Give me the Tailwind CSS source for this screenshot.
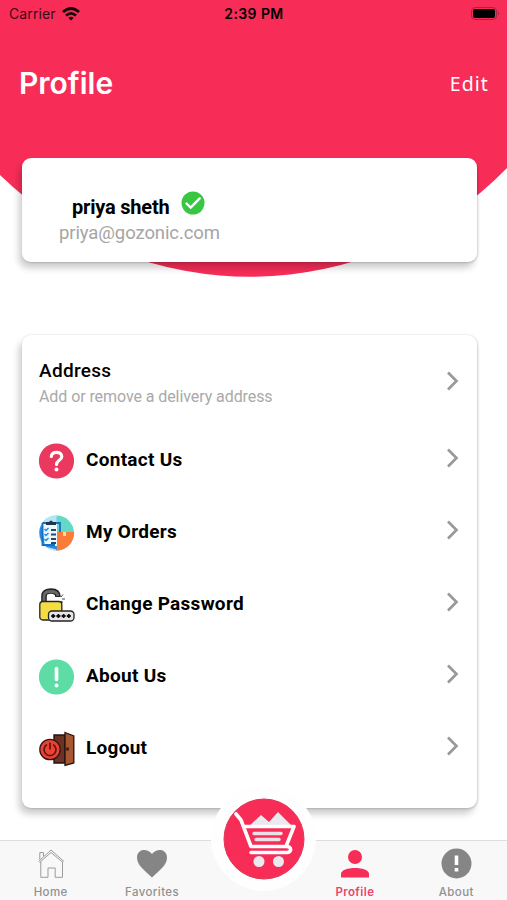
<!DOCTYPE html>
<html lang="en">
<head>
    <meta charset="UTF-8">
    <meta name="viewport" content="width=device-width, initial-scale=1.0">
    <title>Profile</title>
    <script src="https://cdn.jsdelivr.net/npm/@tailwindcss/browser@4"></script>
</head>
<body class="bg-white">
    <div class="relative w-[507px] h-[900px] overflow-hidden flex flex-col font-['Roboto',sans-serif]">
        <!-- Curved backdrop -->
        <svg class="absolute left-0 top-0" width="507" height="280" viewBox="0 0 507 280"><path d="M0 0H507V168A358 358 0 0 1 0 175Z" fill="#f72d58"/></svg>

        <!-- Status bar -->
        <div class="relative h-7 flex items-center justify-between pl-[9px] pr-[7px] pb-px font-['Inter',sans-serif] text-[14px] text-black">
            <div class="flex items-center gap-[6px] w-[199px]">
                <span class="tracking-[0.1px] text-black/80">Carrier</span>
                <svg width="18" height="14" viewBox="0 0 18 14" fill="none" stroke="#160509" stroke-width="2.7"><path d="M1 5.1Q9-2.1 17 5.1M4 8.5Q9 4.1 14 8.5"/><path d="M9 13.5L6.3 10.8Q9 8.6 11.7 10.8Z" fill="#160509" stroke="none"/></svg>
            </div>
            <span class="font-semibold text-[14px] tracking-[0.4px] whitespace-nowrap">2:39 PM</span>
            <div class="w-[200px] flex justify-end">
                <svg width="29" height="14" viewBox="0 0 29 14"><rect x=".5" y=".5" width="25" height="12" rx="3.5" fill="none" stroke="#a32542"/><rect x="2" y="2" width="22" height="9" rx="2" fill="#000"/><path d="M27 4.5q2 2 0 4z" fill="#a32542"/></svg>
            </div>
        </div>

        <!-- Title -->
        <header class="relative h-[130px] flex justify-between items-start px-[19px] pt-[33px] text-white font-['Inter',sans-serif]">
            <h1 class="text-[30px] leading-[44px] font-semibold">Profile</h1>
            <a href="#" class="text-[19.5px] leading-[46px] font-['Noto_Sans',sans-serif] tracking-[1.1px] -mr-px">Edit</a>
        </header>

        <!-- User card -->
        <section class="relative ml-[22px] w-[455px] h-[104px] rounded-[9px] bg-white pt-8 shadow-[-3px_6px_7px_rgba(0,0,0,0.2),1px_1px_2px_rgba(0,0,0,0.15)]">
            <div class="flex items-center pl-[50px] h-[30px]">
                <span class="w-[97px] text-[20px] leading-[30px] font-bold tracking-[-0.2px] whitespace-nowrap pt-[4px]">priya sheth</span>
                <svg class="ml-3 mb-1" width="24" height="24" viewBox="0 0 24 24"><circle cx="12" cy="12" r="11.5" fill="#38c743"/><path d="M5.5 12.5l4.2 4.1 9-9.2" fill="none" stroke="#fff" stroke-width="2.4" stroke-linecap="round"/></svg>
            </div>
            <p class="pl-[37px] text-[18.5px] leading-[27px] tracking-[-0.1px] text-[#a5a5a5] whitespace-nowrap">priya@gozonic.com</p>
        </section>

        <!-- Menu card -->
        <main class="relative mt-[73px] ml-[22px] w-[455px] h-[473px] rounded-[9px] bg-white pl-[17px] pr-[17px] pt-[22px] shadow-[-3px_6px_7px_rgba(0,0,0,0.2),1px_1px_2px_rgba(0,0,0,0.15),0_-1px_2px_rgba(0,0,0,0.06)]">
            <a href="#" class="flex items-center justify-between h-[46px]">
                <div class="mt-2 whitespace-nowrap">
                    <div class="text-[19px] leading-[26px] font-medium tracking-[0.3px]">Address</div>
                    <div class="text-[16px] leading-[26px] tracking-[-0.08px] text-[#a9a9a9]">Add or remove a delivery address</div>
                </div>
                <svg class="mt-px" width="14" height="20" viewBox="0 0 14 20" fill="none" stroke="#999" stroke-width="2.7"><path d="M2 1.5L10.5 10 2 18.5"/></svg>
            </a>
            <a href="#" class="mt-[22px] flex items-center h-[72px]">
                <svg width="36" height="36" viewBox="0 0 36 36"><circle cx="17.5" cy="18" r="17.6" fill="#eb385e"/><path d="M12.3 13.5C12.3 8 22.8 8 22.8 13.5c0 3.800-5.300 3.800-5.300 8" fill="none" stroke="#fff" stroke-width="3.2" stroke-linecap="round"/><circle cx="17.5" cy="26.500" r="2" fill="#fff"/></svg>
                <span class="ml-[11px] mb-[2px] flex-1 text-[19px] font-bold tracking-[0.28px]">Contact Us</span>
                <svg class="-mt-[7px]" width="14" height="20" viewBox="0 0 14 20" fill="none" stroke="#999" stroke-width="2.7"><path d="M2 1.5L10.5 10 2 18.5"/></svg>
            </a>
            <a href="#" class="flex items-center h-[72px]">
                <svg width="36" height="36" viewBox="0 0 36 36">
                    <circle cx="17.5" cy="18" r="17.5" fill="#65d9c7"/>
                    <path d="M17.5 18V.5A17.5 17.5 0 0 0 17.5 35.5z" fill="#b7e5f8"/>
                    <path d="M17 17H35A17.5 17.5 0 0 1 17 35.5z" fill="#fa7c38"/>
                    <path d="M24 17h3v4h-3z" fill="#ffd9a6"/>
                    <path d="M2.5 9.5Q-2 17 2.8 27l5 5 10 2.5V31H6z" fill="#258be2"/>
                    <path d="M4 8h14v23H6z" fill="#eef8ff"/>
                    <path d="M3.5 8H21v9M3.5 8v22H16" fill="none" stroke="#176fc2" stroke-width="1.8"/>
                    <path d="M7 10V7h3q2-3 4 0h3v3z" fill="#23344d"/>
                    <path d="M5.5 14l1.5 1.5L9.5 13M5.5 19l1.5 1.5L9.5 18M5.5 24l1.5 1.5L9.5 23" fill="none" stroke="#168ceb" stroke-width="1.4"/>
                    <path d="M12 15h5M12 19.5h5M12 24h5M12 28h5" stroke="#25486d" stroke-width="1.8"/>
                </svg>
                <span class="ml-[11px] mb-[2px] flex-1 text-[19px] font-bold tracking-[0.28px]">My Orders</span>
                <svg class="-mt-[7px]" width="14" height="20" viewBox="0 0 14 20" fill="none" stroke="#999" stroke-width="2.7"><path d="M2 1.5L10.5 10 2 18.5"/></svg>
            </a>
            <a href="#" class="flex items-center h-[72px]">
                <svg class="mt-[2px]" width="36" height="36" viewBox="0 0 36 36">
                    <path d="M5 15V8q0-5 7-5Q19 3 19 9" fill="none" stroke="#242424" stroke-width="5.6"/>
                    <path d="M5 14V8q0-4.500 7-4.500Q18.500 3.500 19 8" fill="none" stroke="#686868" stroke-width="2.8"/>
                    <rect x=".8" y="13.5" width="22" height="18.5" rx="3" fill="#f6dc43" stroke="#242424" stroke-width="1.3"/>
                    <path d="M22 9l2-2.500M23 11h3M22 13l2 1.500" stroke="#444" stroke-width="1"/>
                    <rect x="9.5" y="23" width="25.5" height="10" rx="3.5" fill="#e5e5e8" stroke="#242424" stroke-width="1.3"/>
                    <path d="M12.2 28h4M14.2 26v4M17.4 28h4M19.4 26v4M22.6 28h4M24.6 26v4M27.8 28h4M29.8 26v4" stroke="#111" stroke-width="1.8"/>
                </svg>
                <span class="ml-[11px] mb-[2px] flex-1 text-[19px] font-bold tracking-[0.28px]">Change Password</span>
                <svg class="-mt-[7px]" width="14" height="20" viewBox="0 0 14 20" fill="none" stroke="#999" stroke-width="2.7"><path d="M2 1.5L10.5 10 2 18.5"/></svg>
            </a>
            <a href="#" class="flex items-center h-[72px]">
                <svg width="36" height="36" viewBox="0 0 36 36"><circle cx="17.5" cy="18" r="17.6" fill="#5ddda5"/><path d="M17.5 9.5v11" stroke="#fff" stroke-width="3.6" stroke-linecap="round"/><circle cx="17.5" cy="26.5" r="2" fill="#fff"/></svg>
                <span class="ml-[11px] mb-[2px] flex-1 text-[19px] font-bold tracking-[0.28px]">About Us</span>
                <svg class="-mt-[7px]" width="14" height="20" viewBox="0 0 14 20" fill="none" stroke="#999" stroke-width="2.7"><path d="M2 1.5L10.5 10 2 18.5"/></svg>
            </a>
            <a href="#" class="flex items-center h-[72px]">
                <svg width="36" height="36" viewBox="0 0 36 36">
                    <path d="M15 4h11v28H15z" fill="#6b3325" stroke="#25130f" stroke-width="1.4"/>
                    <path d="M26 1.5l8.8 3.5v27L26 34.500z" fill="#a85630" stroke="#25130f" stroke-width="1.3"/>
                    <path d="M28.5 16.500v3" stroke="#281711" stroke-width="2.5"/>
                    <circle cx="11" cy="18.5" r="10.2" fill="#ee4035" stroke="#381612" stroke-width="1.3"/>
                    <path d="M8 13.5a6 6 0 1 0 6 0M11 11.5v7" fill="none" stroke="#591810" stroke-width="1.7"/>
                </svg>
                <span class="ml-[11px] mb-[2px] flex-1 text-[19px] font-bold tracking-[0.28px]">Logout</span>
                <svg class="-mt-[7px]" width="14" height="20" viewBox="0 0 14 20" fill="none" stroke="#999" stroke-width="2.7"><path d="M2 1.5L10.5 10 2 18.5"/></svg>
            </a>
        </main>

        <!-- Tab bar -->
        <nav class="relative mt-8 h-[60px] bg-[#f8f8f8] border-t border-[#dedede] grid grid-cols-5 font-['Inter',sans-serif] text-[11.5px] leading-[15px] font-medium tracking-[0.4px] text-[#909090]">
            <a href="#" class="flex flex-col items-center pt-[7px] gap-[6px]">
                <svg width="30" height="31" viewBox="0 0 30 31" fill="none" stroke="#9b9b9b" stroke-width="1"><path d="M2.5 13.500L15 2l13 11.500M3.500 14.500L15 4.500l12 10M3.800 11.500V4.500h3.700v3.500M4.800 14v15.300h7.200V20h7.200v9.300h7.300V14"/></svg>
                <span>Home</span>
            </a>
            <a href="#" class="flex flex-col items-center pt-[7px] gap-[6px]">
                <svg width="32" height="31" viewBox="0 0 32 31"><path d="M16 29.5C8 22 1 17 1 9.5 1 1 11-.5 16 6c5-6.500 15-5 15 3.500 0 7.500-7 12.500-15 20z" fill="#858585"/></svg>
                <span>Favorites</span>
            </a>
            <div></div>
            <a href="#" class="flex flex-col items-center pt-[7px] gap-[6px] text-[#e9456c]">
                <svg width="30" height="31" viewBox="0 0 30 31" fill="#f72d58"><circle cx="15" cy="9" r="7"/><path d="M1 29.500v-3.500c0-8 28-8 28 0v3.500z"/></svg>
                <span class="font-semibold">Profile</span>
            </a>
            <a href="#" class="flex flex-col items-center pt-[7px] gap-[6px]">
                <svg width="31" height="31" viewBox="0 0 31 31"><circle cx="15.5" cy="15.5" r="15" fill="#858585"/><path d="M15.5 7.5v9.5M15.5 20v3.5" stroke="#fff" stroke-width="3.6"/></svg>
                <span>About</span>
            </a>
        </nav>

        <!-- Floating cart button -->
        <a href="#" class="absolute left-[211px] top-[786px] w-[105px] h-[105px] rounded-full bg-[#fefefe] flex items-center justify-center">
            <svg width="82" height="82" viewBox="0 0 82 82">
                <circle cx="41" cy="41" r="40" fill="#f72d58" stroke="#de3659" stroke-width="1"/>
                <path d="M25 29l13-12 8 7 9-10 15 15z" fill="#e9e9ee"/>
                <path d="M13 16l5 6 10 26.500h35l8-20H22M63 48.500c6-.5 6 6 1 6H28" fill="none" stroke="#fff" stroke-width="3.6" stroke-linecap="round" stroke-linejoin="round"/>
                <path d="M31 35.500h27M33 41.500h23" stroke="#eddfe6" stroke-width="3.5" stroke-linecap="round"/>
                <circle cx="36" cy="63.5" r="5.5" fill="#e9e9ee"/><circle cx="55.5" cy="63.5" r="5.5" fill="#e9e9ee"/>
            </svg>
        </a>
    </div>
</body>
</html>
